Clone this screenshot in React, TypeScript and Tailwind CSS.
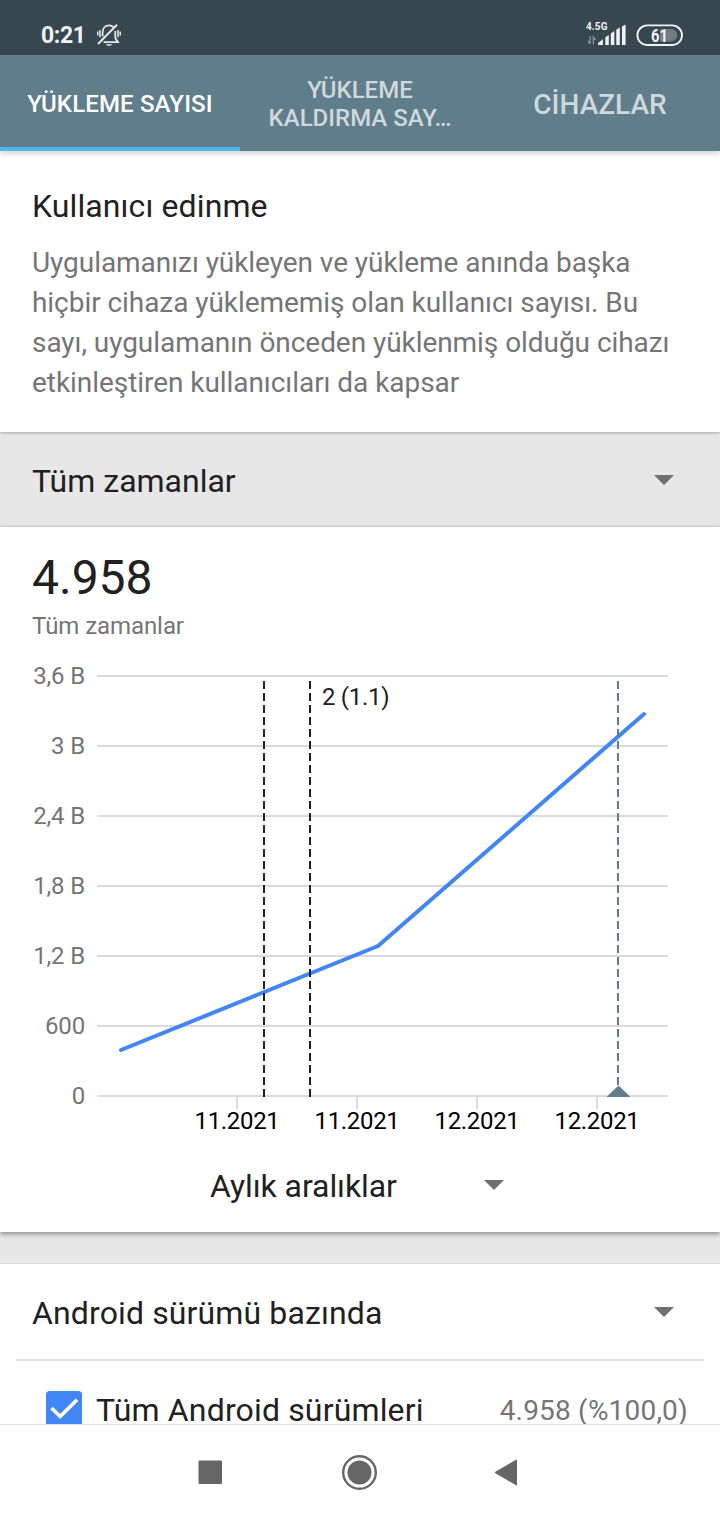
import React from "react";

const yLabels = ["3,6 B", "3 B", "2,4 B", "1,8 B", "1,2 B", "600", "0"];
const xLabels = ["11.2021", "11.2021", "12.2021", "12.2021"];

function Caret() {
  return (
    <svg width="20" height="10" viewBox="0 0 20 10" className="shrink-0">
      <path d="M0 0H20L10 10Z" fill="#6f6f6f" />
    </svg>
  );
}

function StatusBar() {
  return (
    <div className="flex h-[55px] items-start justify-between bg-[#37474f] pl-[41px] pr-[37px] text-[#f0f2f3]">
      <div className="flex">
        <span className="mt-[21px] w-[44px] whitespace-nowrap text-[23px] leading-[30px] font-bold tracking-[-0.35px]">0:21</span>
        <svg className="ml-[12px] mt-[24px]" width="24" height="23" viewBox="0 0 24 23" fill="none" stroke="#e4e8ea">
          <path d="M5.6 12.5V8.5C5.6 4 8.2 1.4 12 1.4C14 1.4 15.4 2 16.6 3.2M18.3 7V14.2L21 18.2H6.5" strokeWidth="1.8" />
          <path d="M1 20L20 0.8" strokeWidth="2" />
          <path d="M8.5 20.2H15.5Q12 23.6 8.5 20.2Z" fill="#e4e8ea" stroke="none" />
          <path d="M0.8 7.5V11.5M3 6V13.2M21 6V13.2M23.2 7.5V11.5" strokeWidth="1.5" />
        </svg>
      </div>
      <div className="flex">
        <svg className="mt-[20px]" width="42" height="27" viewBox="0 0 42 27">
          <text x="0" y="10" fontSize="10" fontWeight="700" fill="#f0f2f3" textLength="21.5">4.5G</text>
          <g fill="none" stroke="#87949a" strokeWidth="1.3">
            <path d="M4.2 16V23.5M1.8 20.8L4.2 23.8" />
            <path d="M7.3 24.5V17L9.7 19.8" />
          </g>
          <g fill="#f0f2f3">
            <path d="M12 24.9V23L16.9 19.2V24.9Z" />
            <path d="M19.3 17.2L22.8 15V24.9H19.3Z" />
            <path d="M24.8 13.5L28.3 11V24.9H24.8Z" />
            <path d="M30.3 9.8L33.8 7.5V24.9H30.3Z" />
            <path d="M36 6.5L39.6 4.4V24.9H36Z" />
          </g>
        </svg>
        <svg className="ml-[8px] mt-[24px]" width="47" height="22" viewBox="0 0 47 22">
          <rect x="1.4" y="1.4" width="44.6" height="19.6" rx="9.8" fill="none" stroke="#f0f2f3" strokeWidth="1.9" />
          <path d="M24 5H35A6.2 6.2 0 0 1 35 17.4H24Z" fill="#717d83" />
          <text x="15" y="17.6" fontSize="18" fontWeight="700" fill="#f0f2f3" textLength="17" lengthAdjust="spacingAndGlyphs">61</text>
        </svg>
      </div>
    </div>
  );
}

function Tabs() {
  return (
    <div className="relative z-10 grid h-24 grid-cols-3 bg-[#607d8b] text-center font-medium text-[#cfd8dc] shadow-[0_2px_6px_rgba(0,0,0,0.2)]">
      <div className="flex items-center justify-center border-b-4 border-[#4fb9ec] pt-[6px] text-[24px] tracking-[0.15px] text-white">
        <span className="whitespace-nowrap">YÜKLEME SAYISI</span>
      </div>
      <div className="flex items-center justify-center pt-[2px] text-[24px] leading-[28px]">
        <span className="whitespace-nowrap">
          YÜKLEME
          <br />
          KALDIRMA SAY…
        </span>
      </div>
      <div className="flex items-center justify-center pt-[4px] text-[28px]">
        <span>CİHAZLAR</span>
      </div>
    </div>
  );
}

function Chart() {
  return (
    <svg width="720" height="480" viewBox="0 660 720 480" className="block">
      {yLabels.map((label, i) => (
        <g key={label}>
          <rect x="97" y={675 + i * 70} width="571" height="2" fill="#dadada" />
          <text x="85" y={684 + i * 70} textAnchor="end" fontSize="24" letterSpacing="-0.15" fill="#757575">
            {label}
          </text>
        </g>
      ))}
      {xLabels.map((label, i) => (
        <g key={i}>
          <rect x={236 + i * 120} y="1097" width="2" height="12" fill="#dadada" />
          <text x={237 + i * 120} y="1129" textAnchor="middle" fontSize="24" letterSpacing="-0.35" fill="#000">
            {label}
          </text>
        </g>
      ))}
      <polyline points="121,1050 378,946 644,714" fill="none" stroke="#4285f4" strokeWidth="4" strokeLinecap="round" strokeLinejoin="round" />
      <g strokeWidth="2" strokeDasharray="8 4">
        <path d="M264 681V1097" stroke="#212121" />
        <path d="M310 681V1097" stroke="#212121" />
        <path d="M618 681V1088" stroke="#607d8b" />
      </g>
      <path d="M618.5 1085.5L630.5 1097H606.5Z" fill="#607d8b" />
      <text x="322" y="705" fontSize="24" letterSpacing="-0.3" fill="#212121">2 (1.1)</text>
    </svg>
  );
}

function NavBar() {
  return (
    <div className="h-24 border-t border-[#e0e0e0] bg-white">
      <svg width="720" height="95" viewBox="0 1425 720 95" className="block" fill="#666">
        <rect x="198.5" y="1460.5" width="23.5" height="23.5" rx="1" />
        <circle cx="359.5" cy="1472.5" r="16.3" fill="none" stroke="#666" strokeWidth="2.4" />
        <circle cx="359.5" cy="1472.5" r="12" />
        <path d="M495 1472.5L516.5 1460V1485Z" stroke="#666" strokeWidth="1" strokeLinejoin="round" />
      </svg>
    </div>
  );
}

export default function App() {
  return (
    <div className="flex h-[1520px] w-[720px] flex-col overflow-hidden bg-[#e7e7e7] font-[Roboto,sans-serif] text-[#212121]">
      <StatusBar />
      <Tabs />
      <section className="relative h-[281px] bg-white px-8 pt-[35px] shadow-[0_1px_3px_rgba(0,0,0,0.28)]">
        <h1 className="text-[32px] leading-[40px] tracking-[0.1px]">Kullanıcı edinme</h1>
        <p className="mt-[17px] whitespace-nowrap text-[28px] leading-[40px] tracking-[-0.055px] text-[#757575]">
          Uygulamanızı yükleyen ve yükleme anında başka
          <br />
          hiçbir cihaza yüklememiş olan kullanıcı sayısı. Bu
          <br />
          sayı, uygulamanın önceden yüklenmiş olduğu cihazı
          <br />
          etkinleştiren kullanıcıları da kapsar
        </p>
      </section>
      <div className="flex h-[95px] items-center justify-between border-b border-[#dcdcdc] pl-8 pr-[46px] text-[32px]">
        <span className="mt-[3px]">Tüm zamanlar</span>
        <div className="mt-[2px]">
          <Caret />
        </div>
      </div>
      <section className="relative h-[705px] bg-white shadow-[0_2px_5px_rgba(0,0,0,0.4)]">
        <div className="h-[133px] px-8 pt-[23px]">
          <div className="text-[48px] leading-[56px]">4.958</div>
          <div className="mt-[6px] text-[24px] leading-[28px] tracking-[-0.07px] text-[#757575]">Tüm zamanlar</div>
        </div>
        <Chart />
        <div className="flex h-[92px] items-center justify-between pl-[210px] pr-[216px] text-[32px]">
          <span className="tracking-[-0.08px]">Aylık aralıklar</span>
          <div className="mb-[2px]">
            <Caret />
          </div>
        </div>
      </section>
      <div className="h-[32px] border-b border-[#dcdcdc]" />
      <section className="h-[160px] overflow-hidden bg-white">
        <div className="mx-4 flex h-[97px] items-center justify-between border-b-2 border-[#e0e0e0] pl-4 pr-[30px] text-[32px]">
          <span className="mt-[2px] tracking-[0.13px]">Android sürümü bazında</span>
          <div className="mt-[1px]">
            <Caret />
          </div>
        </div>
        <div className="flex h-[98px] items-center pl-[46px] pr-8 text-[32px]">
          <svg width="36" height="36" viewBox="0 0 36 36" className="mb-[2px] shrink-0">
            <rect width="36" height="36" rx="4" fill="#4285f4" />
            <path d="M5.5 17L14.2 25.5L31 8.7" fill="none" stroke="#fff" strokeWidth="3.7" />
          </svg>
          <span className="ml-[14px] flex-1 tracking-[0.15px]">Tüm Android sürümleri</span>
          <span className="mt-[2px] text-[28px] tracking-[0.2px] text-[#757575]">4.958 (%100,0)</span>
        </div>
      </section>
      <NavBar />
    </div>
  );
}
